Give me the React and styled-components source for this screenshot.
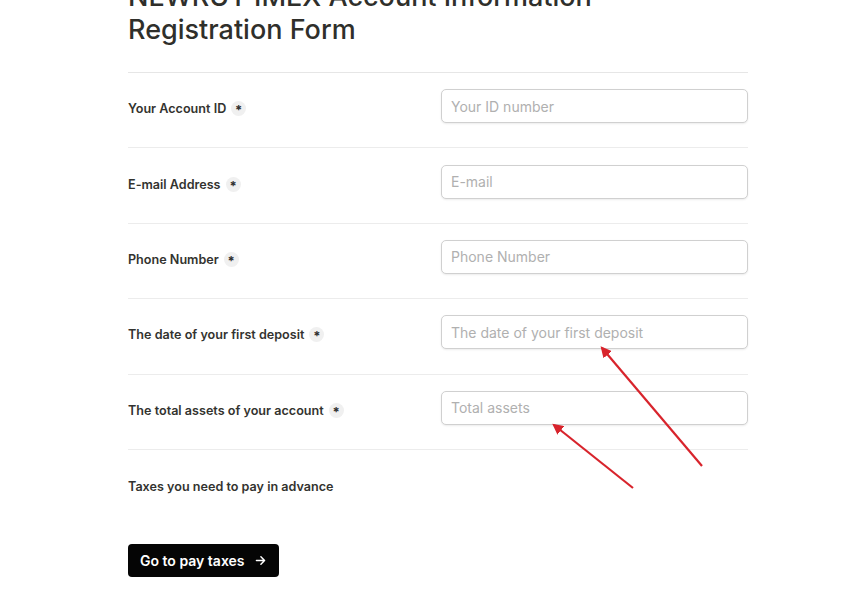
import React from 'react';
import styled, { createGlobalStyle } from 'styled-components';

const GlobalStyle = createGlobalStyle`
  html, body {
    margin: 0;
    padding: 0;
    background: #ffffff;
  }
  body {
    font-family: "Inter", "Liberation Sans", sans-serif;
    color: #333330;
  }
`;

const fields = [
  { label: 'Your Account ID', placeholder: 'Your ID number', required: true },
  { label: 'E-mail Address', placeholder: 'E-mail', required: true },
  { label: 'Phone Number', placeholder: 'Phone Number', required: true },
  { label: 'The date of your first deposit', placeholder: 'The date of your first deposit', required: true },
  { label: 'The total assets of your account', placeholder: 'Total assets', required: true },
];

const App = () => {
  return (
    <>
      <GlobalStyle />
      <Page>
        <Form>
          <Title>
            NEWRUT IMEX Account Information
            <br />
            Registration Form
          </Title>
          <Rows>
            {fields.map((f) => (
              <Row key={f.label}>
                <Label>
                  {f.label}
                  {f.required && <Required>*</Required>}
                </Label>
                <Input placeholder={f.placeholder} />
              </Row>
            ))}
            <Row>
              <Label>Taxes you need to pay in advance</Label>
              <Empty />
            </Row>
          </Rows>
          <Button type="button">
            Go to pay taxes
            <Arrow viewBox="0 0 16 16">
              <path d="M3 8h10M8.5 3.5 13 8l-4.5 4.5" fill="none" stroke="currentColor" strokeWidth="1.8" strokeLinecap="round" strokeLinejoin="round" />
            </Arrow>
          </Button>
        </Form>
        <Annotations viewBox="0 0 852 600">
          <defs>
            <marker id="head" viewBox="0 0 10 10" refX="8" refY="5" markerWidth="5" markerHeight="5" orient="auto-start-reverse">
              <path d="M0 0 10 5 0 10z" fill="#d8242c" />
            </marker>
          </defs>
          <line x1="702" y1="466" x2="602" y2="348" stroke="#d8242c" strokeWidth="2.2" markerEnd="url(#head)" />
          <line x1="633" y1="488" x2="554" y2="425" stroke="#d8242c" strokeWidth="2.2" markerEnd="url(#head)" />
        </Annotations>
      </Page>
    </>
  );
};

const Page = styled.div`
  position: relative;
  width: 852px;
  height: 600px;
  overflow: hidden;
`;

const Form = styled.div`
  width: 620px;
  margin-left: 128px;
  margin-top: -20px;
`;

const Title = styled.h1`
  margin: 0;
  font-size: 27px;
  line-height: 33px;
  font-weight: 500;
  color: #2f2f2b;
  padding-bottom: 26px;
  border-bottom: 1px solid #e6e6e6;
`;

const Rows = styled.div`
  display: flex;
  flex-direction: column;
`;

const Row = styled.div`
  display: grid;
  grid-template-columns: 313px 307px;
  align-items: center;
  height: 75.4px;
  border-bottom: 1px solid #ececec;
  box-sizing: border-box;

  &:last-child {
    border-bottom: none;
  }
`;

const Label = styled.div`
  display: flex;
  align-items: center;
  gap: 5px;
  margin-top: -3px;
  font-size: 12.6px;
  font-weight: 600;
  color: #33332f;
`;

const Required = styled.span`
  display: inline-flex;
  align-items: center;
  justify-content: center;
  width: 15px;
  height: 15px;
  border-radius: 50%;
  background: #f0f0f0;
  font-size: 13px;
  font-weight: 700;
  line-height: 1;
  padding-top: 4px;
  box-sizing: border-box;
  color: #2f2f2f;
`;

const Input = styled.input`
  width: 307px;
  height: 34px;
  box-sizing: border-box;
  border: 1px solid #d0d0d0;
  border-radius: 5px;
  box-shadow: 0 1px 2px rgba(0, 0, 0, 0.08);
  padding: 0 9px;
  font-family: "Inter", "Liberation Sans", sans-serif;
  font-size: 14px;
  color: #333;
  outline: none;
  margin-top: -8px;

  &::placeholder {
    color: #b0b0b0;
  }
`;

const Empty = styled.div``;

const Button = styled.button`
  display: inline-flex;
  align-items: center;
  gap: 9px;
  margin-top: 19px;
  height: 33px;
  padding: 0 12px;
  border: none;
  border-radius: 4px;
  background: #050505;
  color: #ffffff;
  font-family: "Inter", "Liberation Sans", sans-serif;
  font-size: 14px;
  font-weight: 600;
  cursor: pointer;
`;

const Arrow = styled.svg`
  width: 13px;
  height: 13px;
`;

const Annotations = styled.svg`
  position: absolute;
  left: 0;
  top: 0;
  width: 852px;
  height: 600px;
  pointer-events: none;
`;

export default App;
